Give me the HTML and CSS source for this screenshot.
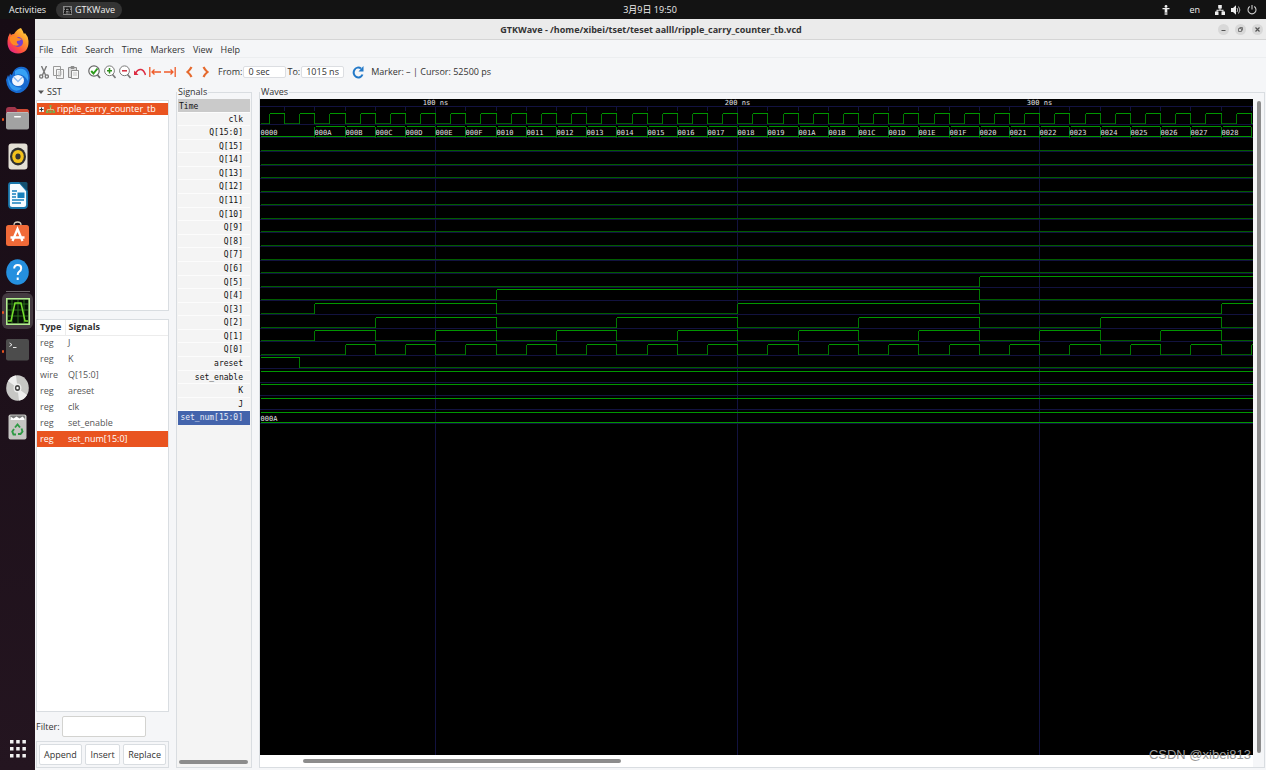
FILE: index.html
```html
<!DOCTYPE html>
<html lang="en">
<head>
<meta charset="utf-8">
<title>GTKWave</title>
<link rel="stylesheet" href="styles.css">
</head>
<body>
<header class="topbar">
  <div class="topbar-left">
    <button class="activities">Activities</button>
    <button class="app-pill">
      <svg width="9" height="9" viewBox="0 0 9 9"><rect width="9" height="9" fill="#888"/><path d="M1 2h7M1 4.500h7M1 7h7M2.500 1v7M6 1v7" stroke="#2a2a2a"/><path d="M1 8l2-6h3l2 6" fill="none" stroke="#111"/></svg>
      GTKWave
    </button>
  </div>
  <time class="clock">3月9日 19:50</time>
  <div class="topbar-right">
    <svg width="8" height="10" viewBox="0 0 8 10" fill="#eee"><circle cx="4" cy="1.400" r="1.400"/><path d="M.5 3h7v1.300H5.300V10H4.300V7h-.6v3h-1V4.300H.5z"/></svg>
    <span class="lang">en</span>
    <svg width="10" height="10" viewBox="0 0 10 10" fill="#eee"><path d="M3.200 0h3.600v3.500H5.500v1.300h3v1.700H10V10H6.500V6.500h1v-.8h-5v.8h1V10H0V6.500h1.500V4.800h3V3.500H3.200z"/></svg>
    <svg width="10" height="10" viewBox="0 0 10 10"><path d="M0 3h2l3-2.700v9.400L2 7H0z" fill="#eee"/><path d="M6 3q1.500 2 0 4M7.500 1.500q2.800 3.500 0 7" fill="none" stroke="#bbb"/></svg>
    <svg width="10" height="10" viewBox="0 0 10 10" fill="none" stroke="#ccc" stroke-width="1.100"><path d="M5 0v4.500M2.800 1.500a4 4 0 1 0 4.400 0"/></svg>
  </div>
</header>

<div class="desktop">
  <nav class="dock" aria-label="Dock">
    <div class="dock-group">
      <button class="dock-item" aria-label="Firefox"><svg width="22" height="26" viewBox="0 0 22 26"><defs><linearGradient id="ff" x1="1" y1="0" x2=".2" y2="1"><stop offset="0" stop-color="#ffe94a"/><stop offset=".4" stop-color="#ff9a2c"/><stop offset=".75" stop-color="#ff4a42"/><stop offset="1" stop-color="#e0208c"/></linearGradient></defs><path d="M14 0q2 3 3 6l1-1q3 3 3.500 8Q22 25 11 25.500 0 25 .5 13 1 8 3 5l1 2q1-1 3-1 3-5 7-6z" fill="url(#ff)"/><circle cx="11" cy="14" r="5" fill="#7541cf"/><path d="M3 9q5-3 8 1l4 1q-2 2-5 2-1 2 2 4-5 2-8-2-2-3-1-6z" fill="#ff8a24"/></svg></button>
      <button class="dock-item" aria-label="Thunderbird"><svg width="24" height="28" viewBox="0 0 24 28"><path d="M13 1q8-1 10 5 2 8-1 14-5 8-12 7Q1 25 0 14L2 9l1 2 1-3 2 1q2-7 7-8z" fill="#1769cf"/><path d="M9 5q5-4 10-1 4 4 3 11-5-9-13-6z" fill="#36a1f5"/><path d="M2 11q3 11 14 11-5 5-10 1-4-4-4-12z" fill="#3098ef"/><ellipse cx="12" cy="14.500" rx="6" ry="5.500" fill="#f2f6fd"/><path d="M7.500 11l4.500 4.500 4.500-4.500" fill="none" stroke="#8bb9ef" stroke-width="1.300"/></svg></button>
      <button class="dock-item running" aria-label="Files"><svg width="23" height="24" viewBox="0 0 23 24"><path d="M0 4q0-3 3-3h6l2 2h9q3 0 3 3v4H0z" fill="#a1364b"/><path d="M11 3h9q3 0 3 3v3H11z" fill="#cf4a33"/><rect y="6" width="23" height="17.500" rx="2" fill="#a2a2a2"/><path d="M1 6.500h21" stroke="#bbb"/><rect x="8" y="10" width="7" height="1.500" rx=".7" fill="#fff"/></svg></button>
      <button class="dock-item" aria-label="Rhythmbox"><svg width="20" height="27" viewBox="0 0 20 27"><rect x=".5" y=".5" width="19" height="26" rx="3" fill="#e4e0d5"/><ellipse cx="10" cy="13.500" rx="8" ry="9" fill="#303030"/><ellipse cx="10" cy="13.500" rx="5.800" ry="6.600" fill="#f3c21c"/><ellipse cx="10" cy="13.500" rx="2.600" ry="3" fill="#333"/></svg></button>
      <button class="dock-item" aria-label="LibreOffice Writer"><svg width="20" height="27" viewBox="0 0 20 27"><path d="M3 1h9l7 8v14q0 3-3 3H4q-3 0-3-3V3q0-2 2-2z" fill="#f5fbff" stroke="#1876ab" stroke-width="1.800"/><path d="M11 0h7q1.500 0 1.500 1.500V9z" fill="#15506f"/><path d="M4 9h5M4 12h4M4 15h4M4 18h12M4 21h9" stroke="#1981bd" stroke-width="1.500"/><rect x="9.500" y="10.500" width="7" height="5.500" fill="#1981bd"/></svg></button>
      <button class="dock-item" aria-label="Ubuntu Software"><svg width="23" height="26" viewBox="0 0 23 26"><path d="M8 6V4q0-3 3.500-3T15 4v2" fill="none" stroke="#d8cdbb" stroke-width="1.300"/><rect y="4" width="23" height="21" rx="2.500" fill="#f06a38"/><path d="M6.500 20l5-12 5 12M4.500 16.500h14" fill="none" stroke="#fff" stroke-width="2.300"/></svg></button>
      <button class="dock-item" aria-label="Help"><svg width="23" height="26" viewBox="0 0 23 26"><ellipse cx="11.500" cy="13" rx="11.300" ry="12.700" fill="#2590df"/><path d="M8.200 9.500q0-3.500 3.500-3.500t3.500 3.200q0 2-2 3.500-1.500 1-1.500 3.300M11.700 18.500v2.500" fill="none" stroke="#fff" stroke-width="2"/></svg></button>
    </div>
    <hr class="dock-rule">
    <div class="dock-group dock-lower">
      <button class="dock-item running active" aria-label="GTKWave"><svg width="24" height="27" viewBox="0 0 24 27"><rect x=".8" y=".8" width="22.400" height="25.400" fill="#050f05" stroke="#b2ed90" stroke-width="1.600"/><path d="M2 6h20M2 12h20M2 18h20M6 2v23M12 2v23M18 2v23" stroke="#2a6b1b"/><path d="M2 23h3L9 5h6l4 18h3" fill="none" stroke="#75df2d" stroke-width="1.500"/></svg></button>
      <button class="dock-item running" aria-label="Terminal"><svg width="23" height="22" viewBox="0 0 23 22"><rect width="23" height="21.500" rx="2" fill="#4c4c4c"/><path d="M3.500 4l2.500 1.700L3.500 7.500M7 8.500h3.500" fill="none" stroke="#e8e8e8"/></svg></button>
      <button class="dock-item" aria-label="Disc"><svg width="23" height="26" viewBox="0 0 23 26"><ellipse cx="11.500" cy="13" rx="11.300" ry="12.700" fill="#c7c7c5"/><path d="M11.500 13L2 6Q5 1 10 .5zM11.500 13L21 20q-3 5-8 5.500z" fill="#eee"/><ellipse cx="11.500" cy="13" rx="4" ry="4.500" fill="#eee"/><ellipse cx="11.500" cy="13" rx="2.600" ry="3" fill="#444"/><circle cx="11.500" cy="13" r="1.200" fill="#fff"/></svg></button>
      <button class="dock-item" aria-label="Trash"><svg width="19" height="26" viewBox="0 0 19 26"><rect x=".5" y=".5" width="18" height="25" rx="2" fill="#c6c6c3"/><rect x="2" y="1.500" width="15" height="4" rx="1" fill="#777"/><path d="M2.500 5V2.500l3 2 3-2 3 2 3-2 2 2V6h-14z" fill="#fff"/><path d="M7 13.500l2.500-3 2.500 3M13.500 14.500l1 3-2 2.500h-2.500M8 20.500H5.500l-1.200-3 1.700-2.500" fill="none" stroke="#2f9a45" stroke-width="1.900"/></svg></button>
    </div>
    <button class="dock-item apps" aria-label="Show Applications"><svg width="16" height="18" viewBox="0 0 16 18" fill="#f2f2f2"><path d="M0 0h3.500v3.500H0zM6.200 0h3.500v3.500H6.200zM12.400 0h3.500v3.500h-3.500zM0 7h3.500v3.500H0zM6.200 7h3.500v3.500H6.200zM12.400 7h3.500v3.500h-3.500zM0 14h3.500v3.500H0zM6.200 14h3.500v3.500H6.200zM12.400 14h3.500v3.500h-3.500z"/></svg></button>
  </nav>

  <main class="window">
    <div class="titlebar">
      <h1 class="title">GTKWave - /home/xibei/tset/teset aalll/ripple_carry_counter_tb.vcd</h1>
      <div class="window-controls">
        <button aria-label="Minimize"><svg width="11" height="11" viewBox="0 0 11 11" stroke="#555"><path d="M3.500 6.500h4"/></svg></button>
        <button aria-label="Restore"><svg width="11" height="11" viewBox="0 0 11 11" fill="none" stroke="#777"><path d="M3.500 4.500h3v3h-3zM4.500 3.500h3v3"/></svg></button>
        <button aria-label="Close"><svg width="11" height="11" viewBox="0 0 11 11" stroke="#555" stroke-width="1.200"><path d="M3.500 3.500l4 4M7.500 3.500l-4 4"/></svg></button>
      </div>
    </div>
    <div class="menubar" role="menubar">
      <button role="menuitem">File</button><button role="menuitem">Edit</button><button role="menuitem">Search</button><button role="menuitem">Time</button><button role="menuitem">Markers</button><button role="menuitem">View</button><button role="menuitem">Help</button>
    </div>
    <div class="toolbar">
      <div class="tools">
        <button aria-label="Cut"><svg width="10" height="13" viewBox="0 0 10 13" fill="none" stroke="#777" stroke-width="1.400"><path d="M2.500 0L6.500 9M7.500 0l-4 9"/><circle cx="2.200" cy="10.500" r="1.600"/><circle cx="7.800" cy="10.500" r="1.600"/></svg></button>
        <button aria-label="Copy"><svg width="11" height="13" viewBox="0 0 11 13" fill="#f6f6f6" stroke="#999"><path d="M.5.5h7v9h-7zM3.500 3.500h7v9h-7z"/><path d="M5 6h4M5 8h4M5 10h3" stroke="#c4c4c4"/></svg></button>
        <button aria-label="Paste"><svg width="11" height="13" viewBox="0 0 11 13" fill="#ddd" stroke="#8d8d8d"><path d="M.5 1.500h8v10h-8zM3 .5h3v2H3z"/><path d="M3.500 4.500h7v8h-7z" fill="#f8f8f8"/><path d="M5 7h4M5 9h4" stroke="#c4c4c4"/></svg></button>
      </div>
      <div class="tools">
        <button aria-label="Zoom fit"><svg width="13" height="14" viewBox="0 0 13 14" fill="none"><circle cx="6" cy="6" r="5.200" fill="#fff" stroke="#666" stroke-width="1.200"/><path d="M9.500 10l2.500 3" stroke="#666" stroke-width="1.800"/><path d="M3.200 6l2.300 2.500 4-5" stroke="#2d9c1c" stroke-width="2"/></svg></button>
        <button aria-label="Zoom in"><svg width="12" height="14" viewBox="0 0 12 14" fill="none"><circle cx="5.500" cy="5.800" r="4.900" fill="#fff" stroke="#7a7a7a"/><path d="M8.500 9.500l3 3.500" stroke="#777" stroke-width="1.600"/><path d="M5.500 3v5.500M3 5.800h5" stroke="#2d8f1c" stroke-width="1.500"/></svg></button>
        <button aria-label="Zoom out"><svg width="12" height="14" viewBox="0 0 12 14" fill="none"><circle cx="5.500" cy="5.800" r="4.900" fill="#fff" stroke="#7a7a7a"/><path d="M8.500 9.500l3 3.500" stroke="#777" stroke-width="1.600"/><path d="M3 5.800h5" stroke="#d12b3d" stroke-width="1.500"/></svg></button>
        <button aria-label="Zoom undo"><svg width="12" height="9" viewBox="0 0 12 9" fill="none"><path d="M1.500 5Q4 1 7 1.500t4.500 5.500" stroke="#dc2b42" stroke-width="1.500"/><path d="M0 2.500V7h4.500z" fill="#dc2b42"/></svg></button>
        <button aria-label="Zoom to start"><svg width="12" height="10" viewBox="0 0 12 10" fill="none" stroke="#ef5b29" stroke-width="1.300"><path d="M.8 0v10M3 5h9M5.500 2.500L3 5l2.500 2.500"/></svg></button>
        <button aria-label="Zoom to end"><svg width="12" height="10" viewBox="0 0 12 10" fill="none" stroke="#ef5b29" stroke-width="1.300"><path d="M11.200 0v10M0 5h9M6.500 2.500L9 5 6.500 7.500"/></svg></button>
      </div>
      <div class="tools wide">
        <button aria-label="Previous edge"><svg width="7" height="12" viewBox="0 0 7 12" fill="none" stroke="#e56a2e" stroke-width="2.200"><path d="M5.500 1Q4 4 1.500 6 4 8 5.500 11"/></svg></button>
        <button aria-label="Next edge"><svg width="7" height="12" viewBox="0 0 7 12" fill="none" stroke="#e56a2e" stroke-width="2.200"><path d="M1.500 1Q3 4 5.500 6 3 8 1.500 11"/></svg></button>
      </div>
      <div class="range">
        <label for="from">From:</label><input id="from" value="0 sec">
        <label for="to">To:</label><input id="to" value="1015 ns">
      </div>
      <button class="reload" aria-label="Reload"><svg width="12" height="13" viewBox="0 0 12 13" fill="none"><path d="M9 2.500A4.600 5 0 1 0 10.500 8.500" stroke="#2379c8" stroke-width="2"/><path d="M11.500 0v5.500H6.500z" fill="#2379c8"/></svg></button>
      <output class="status">Marker: – | Cursor: 52500 ps</output>
    </div>

    <div class="panes">
      <section class="side">
        <button class="sst"><svg width="6" height="4" viewBox="0 0 6 4"><path d="M0 .5h6L3 4z" fill="#555"/></svg>SST</button>
        <div class="tree">
          <button class="tree-row">
            <svg width="5" height="7" viewBox="0 0 5 7"><path d="M0 1h5v5H0z" fill="#eee"/><path d="M.5 3.500h4M2.500 1.500v4" stroke="#333"/></svg>
            <svg width="9" height="8" viewBox="0 0 9 8"><path d="M4.500 2v2M1.500 6V4.500h6V6" fill="none" stroke="#d6c389"/><path d="M3.500 0h2v2.500h-2zM0 5.500h2.500V8H0zM3.300 5.500h2.400V8H3.300zM6.500 5.500H9V8H6.500z" fill="#77ad51"/></svg>
            ripple_carry_counter_tb
          </button>
        </div>
        <div class="signal-table">
          <table>
            <thead><tr><th class="type">Type</th><th>Signals</th></tr></thead>
            <tbody>
              <tr><td>reg</td><td>J</td></tr>
              <tr><td>reg</td><td>K</td></tr>
              <tr><td>wire</td><td>Q[15:0]</td></tr>
              <tr><td>reg</td><td>areset</td></tr>
              <tr><td>reg</td><td>clk</td></tr>
              <tr><td>reg</td><td>set_enable</td></tr>
              <tr class="selected"><td>reg</td><td>set_num[15:0]</td></tr>
            </tbody>
          </table>
        </div>
        <div class="filter"><label for="filter">Filter:</label><input id="filter"></div>
        <div class="actions"><button>Append</button><button>Insert</button><button>Replace</button></div>
      </section>

      <fieldset class="frame names-frame">
        <legend>Signals</legend>
        <ul class="names">
          <li class="time">Time</li><li>clk</li><li>Q[15:0]</li><li>Q[15]</li><li>Q[14]</li><li>Q[13]</li><li>Q[12]</li><li>Q[11]</li><li>Q[10]</li><li>Q[9]</li><li>Q[8]</li><li>Q[7]</li><li>Q[6]</li><li>Q[5]</li><li>Q[4]</li><li>Q[3]</li><li>Q[2]</li><li>Q[1]</li><li>Q[0]</li><li>areset</li><li>set_enable</li><li>K</li><li>J</li><li class="selected">set_num[15:0]</li>
        </ul>
        <div class="names-scroll"></div>
      </fieldset>

      <fieldset class="frame waves-frame">
        <legend>Waves</legend>
        <svg class="waves" id="waves" shape-rendering="crispEdges"></svg>
        <div class="v-scroll"></div>
        <div class="h-scroll"><div class="h-thumb"></div></div>
      </fieldset>
    </div>
    <div class="watermark">CSDN @xibei813</div>
  </main>
</div>
<script src="waves.js"></script>
</body>
</html>
```

FILE: styles.css
```css
* { box-sizing: border-box; }
body {
  margin: 0;
  height: 100vh;
  display: flex;
  flex-direction: column;
  overflow: hidden;
  font: 9px/14px "Open Sans", "Noto Sans CJK SC", sans-serif;
  color: #333;
  background: #1b0f17;
}
button, input { font: inherit; color: inherit; margin: 0; padding: 0; border: 0; background: none; }
button { display: flex; align-items: center; justify-content: center; white-space: nowrap; }
svg { display: block; flex: none; }

.topbar {
  height: 19px;
  flex: none;
  display: grid;
  grid-template-columns: 1fr auto 1fr;
  align-items: center;
  padding: 1px 9px 0;
  background: #131313;
  color: #f0f0f0;
}
.topbar-left { display: flex; align-items: center; gap: 10px; }
.app-pill { gap: 3px; height: 16px; padding: 0 7px; border-radius: 8px; background: #343434; }
.clock { padding-left: 34px; }
.topbar-right { display: flex; align-items: center; justify-content: flex-end; gap: 6px; }
.lang { padding: 0 9px 0 13px; }

.desktop { flex: 1; min-height: 0; display: flex; }
.dock { width: 35px; flex: none; display: flex; flex-direction: column; align-items: center; padding: 6px 2px 5px; background: linear-gradient(#170c15, #241520); }
.dock-group { width: 100%; height: 263px; display: flex; flex-direction: column; justify-content: space-between; }
.dock-lower { height: 152px; }
.dock-item { position: relative; width: 31px; height: 32px; }
.dock-lower .dock-item { height: 36px; }
.dock-rule { width: 24px; height: 1px; margin: 3px 0 1px; border: 0; background: #6c646a; }
.running::before { content: ""; position: absolute; left: 0; top: 50%; width: 2px; height: 3px; background: #e95420; border-radius: 1px; }
.active { border-radius: 6px; background: #443a41; }
.apps { margin-top: auto; }

.window { position: relative; flex: 1; min-width: 0; display: flex; flex-direction: column; background: #f5f6f8; }
.titlebar { height: 21px; flex: none; display: grid; grid-template-columns: 70px 1fr 70px; align-items: center; padding: 1px 3px 0 4px; background: #ebebeb; border-bottom: 1px solid #d5d5d5; }
.title { grid-column: 2; margin: 0; font-size: 9px; line-height: 14px; text-align: center; white-space: nowrap; }
.window-controls { display: flex; justify-content: flex-end; gap: 6px; }
.window-controls button { border-radius: 6px; background: #d8d8d8; }
.menubar { height: 18px; flex: none; display: flex; align-items: center; gap: 8px; padding: 2px 4px 0; border-bottom: 1px solid #eceef0; }
.toolbar { height: 27px; flex: none; display: flex; align-items: center; padding: 1px 4px 0; white-space: nowrap; }
.tools { display: flex; align-items: center; gap: 4px; padding-right: 8px; }
.tools + .tools { gap: 3px; padding-left: 1px; }
.tools + .wide { gap: 9px; padding: 0 9px 0 2px; }
.range { display: flex; align-items: center; gap: 1px; }
.range input { width: 43px; height: 12px; padding: 0 4px; border: 1px solid #dcdee2; border-radius: 2px; background: #fff; }
.reload { margin: 0 7px 0 8px; }

.panes { flex: 1; min-height: 0; display: flex; gap: 7px; padding: 0 1px 2px; }
.side { width: 133px; flex: none; display: flex; flex-direction: column; }
.sst { gap: 3px; height: 14px; justify-content: flex-start; align-items: center; padding: 0 2px; }
.tree { height: 211px; margin-top: 1px; padding-top: 2px; border: 1px solid #d9dde1; background: #fff; }
.tree-row { width: 100%; height: 12px; gap: 2px; padding-left: 2px; justify-content: flex-start; background: #e95420; color: #fff; }
.signal-table { flex: 1; margin-top: 8px; border: 1px solid #d9dde1; background: #fff; }
table { width: 100%; border-collapse: collapse; table-layout: fixed; }
th { height: 15px; padding: 0 3px; text-align: left; border-bottom: 1px solid #ececec; color: #333; }
td { height: 16px; padding: 0 3px; color: #555; }
.type { width: 28px; border-right: 1px solid #ececec; }
tr.selected td { background: #e95420; color: #fff; }
.filter { display: flex; align-items: center; gap: 2px; padding: 4px 0; }
.filter input { width: 84px; height: 21px; border: 1px solid #d3d3d0; border-radius: 2px; background: #fff; }
.actions { display: flex; justify-content: space-between; padding: 2px; border: 1px solid #d9dde1; }
.actions button { height: 21px; padding: 0 4px; border: 1px solid #d9dde1; border-radius: 2px; background: #fff; }

.frame { min-width: 0; margin: 0; padding: 0 1px; border: 1px solid #d9dde1; }
.frame legend { height: 14px; padding: 0 1px; }
.names-frame { position: relative; width: 76px; flex: none; background: linear-gradient(#f4f4f4, #f4f4f4) no-repeat 0 8px; }
.names-frame legend { margin-left: -1px; }
.names {
  height: 326px;
  margin: 0;
  padding: 0;
  list-style: none;
  display: grid;
  grid-template-rows: repeat(24, minmax(0, 1fr));
  font: 8px/13px "DejaVu Sans Mono", monospace;
  color: #111;
}
.names li { padding: 0 7px 0 1px; text-align: right; border-bottom: 1px solid #fcfcfc; white-space: nowrap; }
.names .time { text-align: left; background: #cacaca; line-height: 15px; }
.names .selected { background: #4464ac; color: #e8edf8; border-color: #4464ac; }
.names-scroll { position: absolute; left: 2px; right: 3px; bottom: 3px; height: 4px; border-radius: 2px; background: #8c8c8c; }
.waves-frame { flex: 1; display: grid; grid-template: minmax(0, 1fr) 12px / minmax(0, 1fr) 11px; padding: 0; }
.waves { width: 100%; height: 100%; background: #000; font: 7px "DejaVu Sans Mono", monospace; }
.v-scroll { width: 4px; margin: 2px auto; border-radius: 2px; background: #8c8c8c; }
.h-scroll { display: flex; align-items: center; background: #fff; }
.h-thumb { width: 32%; height: 4px; margin-left: 43px; border-radius: 2px; background: #8c8c8c; }

.high { stroke: #009600; }
.low { stroke: #005c00; }
.edge { stroke: #007a00; }
.grid { stroke: #12123f; }
.value { fill: #e0e0e0; }

.watermark { position: absolute; right: 15px; bottom: 6px; font: 13px/18px "Liberation Sans", sans-serif; color: #9a9a9a; }
```

FILE: waves.js
```javascript
(function () {
  var svg = document.getElementById('waves');
  var width = svg.clientWidth;
  var height = svg.clientHeight;
  var START = 42, SCALE = 3.0205;
  var paths = { grid: '', low: '', edge: '', high: '' };
  var labels = [];

  function x(t) { return Math.max(0, Math.round((t - START) * SCALE)) + 0.5; }
  function top(row) { return Math.floor(14.3 + row * 13.58) + 0.5; }
  function h(kind, x1, x2, y) { paths[kind] += 'M' + x1 + ' ' + y + 'H' + x2; }
  function v(kind, px, y1, y2) { paths[kind] += 'M' + px + ' ' + y1 + 'V' + y2; }
  function label(px, y, text, anchor) {
    if (px + 17 < width) labels.push([px, y, text, anchor]);
  }

  var end = Math.min(1015, START + width / SCALE);

  // Steps are [time, level] pairs, first one at the left edge.
  function bit(row, steps) {
    var hi = top(row), lo = hi + 10;
    steps.forEach(function (s, i) {
      var x1 = x(s[0]), x2 = x(i + 1 < steps.length ? steps[i + 1][0] : end);
      h(s[1] ? 'high' : 'low', x1, x2, s[1] ? hi : lo);
      if (i) v('edge', x1, hi, lo);
    });
  }
  function bus(row, cells) {
    var hi = top(row), lo = hi + 10;
    cells.forEach(function (c, i) {
      var x1 = x(c[0]), x2 = x(i + 1 < cells.length ? cells[i + 1][0] : end);
      if (c[1] !== '0000' || i) { h('high', x1 + (i ? 1 : 0), x2 - 1, hi); }
      h('high', x1 + (i ? 1 : 0), x2 - 1, lo);
      if (i) v('edge', x1, hi, lo + 1);
      label(x1, hi + 8, c[1]);
    });
  }
  function hex(n) { return ('000' + n.toString(16).toUpperCase()).slice(-4); }

  h('grid', 0, width, 7.5);
  for (var t = 50; t < end; t += 10) v('grid', x(t), 7, 12);
  for (t = 100; t < end; t += 100) {
    v('grid', x(t), 7, height);
    label(x(t), 6, t + ' ns', 'middle');
  }
  for (var r = 0; r < 23; r++) h('grid', 0, width, top(r) + 11);

  var clk = [[START, 0]];
  for (t = 45; t < end; t += 5) clk.push([t, t % 10 === 5 ? 1 : 0]);
  bit(0, clk);

  var cells = [[START, '0000']];
  for (t = 60; t < end; t += 10) cells.push([t, hex(t / 10 + 4)]);
  bus(1, cells);

  for (var b = 15; b >= 0; b--) {
    var steps = [[START, 0]], last = 0;
    for (t = 60; t < end; t += 10) {
      var level = ((t / 10 + 4) >> b) & 1;
      if (level !== last) { steps.push([t, level]); last = level; }
    }
    bit(17 - b, steps);
  }
  bit(18, [[START, 1], [55, 0]]);
  bit(19, [[START, 1]]);
  bit(20, [[START, 1]]);
  bit(21, [[START, 1]]);
  bus(22, [[START, '000A']]);

  var ns = 'http://www.w3.org/2000/svg';
  Object.keys(paths).forEach(function (kind) {
    var p = document.createElementNS(ns, 'path');
    p.setAttribute('class', kind);
    p.setAttribute('d', paths[kind]);
    svg.appendChild(p);
  });
  labels.forEach(function (l) {
    var e = document.createElementNS(ns, 'text');
    e.setAttribute('class', 'value');
    e.setAttribute('x', l[0]);
    e.setAttribute('y', l[1]);
    if (l[3]) e.setAttribute('text-anchor', l[3]);
    e.textContent = l[2];
    svg.appendChild(e);
  });
})();
```
